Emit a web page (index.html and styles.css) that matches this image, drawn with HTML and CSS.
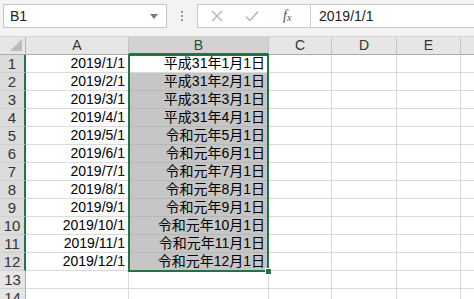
FILE: index.html
```html
<!DOCTYPE html>
<html lang="ja">
<head>
<meta charset="utf-8">
<link rel="stylesheet" href="styles.css">
</head>
<body>
<div class="app">
  <div class="toolbar">
    <div class="namebox">
      <span class="name">B1</span>
      <svg class="dd" width="8" height="5" viewBox="0 0 8 5"><path d="M0 0H8L4 5Z" fill="#7a7a7a"/></svg>
    </div>
    <div class="dots"><i></i><i></i><i></i></div>
    <div class="fbox">
      <div class="fbtns">
        <svg class="ico" width="12" height="12" viewBox="0 0 12 12"><path d="M1 1L11 11M11 1L1 11" stroke="#b4b4b4" stroke-width="1.4" fill="none"/></svg>
        <svg class="ico" width="14" height="12" viewBox="0 0 14 12"><path d="M1 6.5L5 10.5L13 1.5" stroke="#b4b4b4" stroke-width="1.4" fill="none"/></svg>
        <span class="fx">f<sub>x</sub></span>
      </div>
      <div class="finput">2019/1/1</div>
    </div>
  </div>
  <div class="sheet">
    <div class="grid">
      <div class="corner"><svg width="12" height="12" viewBox="0 0 12 12"><path d="M12 0V12H0Z" fill="#bcbcbc"/></svg></div>
      <div class="ch">A</div>
      <div class="ch sel">B</div>
      <div class="ch">C</div>
      <div class="ch">D</div>
      <div class="ch">E</div>
      <div class="ch last"></div>

      <div class="rh sel">1</div><div class="c num">2019/1/1</div><div class="c num act">平成31年1月1日</div><div class="c"></div><div class="c"></div><div class="c"></div><div class="c last"></div>
      <div class="rh sel">2</div><div class="c num">2019/2/1</div><div class="c num hl">平成31年2月1日</div><div class="c"></div><div class="c"></div><div class="c"></div><div class="c last"></div>
      <div class="rh sel">3</div><div class="c num">2019/3/1</div><div class="c num hl">平成31年3月1日</div><div class="c"></div><div class="c"></div><div class="c"></div><div class="c last"></div>
      <div class="rh sel">4</div><div class="c num">2019/4/1</div><div class="c num hl">平成31年4月1日</div><div class="c"></div><div class="c"></div><div class="c"></div><div class="c last"></div>
      <div class="rh sel">5</div><div class="c num">2019/5/1</div><div class="c num hl">令和元年5月1日</div><div class="c"></div><div class="c"></div><div class="c"></div><div class="c last"></div>
      <div class="rh sel">6</div><div class="c num">2019/6/1</div><div class="c num hl">令和元年6月1日</div><div class="c"></div><div class="c"></div><div class="c"></div><div class="c last"></div>
      <div class="rh sel">7</div><div class="c num">2019/7/1</div><div class="c num hl">令和元年7月1日</div><div class="c"></div><div class="c"></div><div class="c"></div><div class="c last"></div>
      <div class="rh sel">8</div><div class="c num">2019/8/1</div><div class="c num hl">令和元年8月1日</div><div class="c"></div><div class="c"></div><div class="c"></div><div class="c last"></div>
      <div class="rh sel">9</div><div class="c num">2019/9/1</div><div class="c num hl">令和元年9月1日</div><div class="c"></div><div class="c"></div><div class="c"></div><div class="c last"></div>
      <div class="rh sel">10</div><div class="c num">2019/10/1</div><div class="c num hl">令和元年10月1日</div><div class="c"></div><div class="c"></div><div class="c"></div><div class="c last"></div>
      <div class="rh sel">11</div><div class="c num">2019/11/1</div><div class="c num hl">令和元年11月1日</div><div class="c"></div><div class="c"></div><div class="c"></div><div class="c last"></div>
      <div class="rh sel">12</div><div class="c num">2019/12/1</div><div class="c num hl">令和元年12月1日</div><div class="c"></div><div class="c"></div><div class="c"></div><div class="c last"></div>
      <div class="rh">13</div><div class="c"></div><div class="c"></div><div class="c"></div><div class="c"></div><div class="c"></div><div class="c last"></div>
      <div class="rh">14</div><div class="c"></div><div class="c"></div><div class="c"></div><div class="c"></div><div class="c"></div><div class="c last"></div>
    </div>
    <div class="selection"><span class="handle"></span></div>
  </div>
</div>
</body>
</html>
```

FILE: styles.css
```css
* { box-sizing: border-box; }
html, body { margin: 0; padding: 0; }
body {
  width: 474px;
  height: 299px;
  overflow: hidden;
  background: #fff;
  font-family: "Liberation Sans", "Noto Sans CJK JP", sans-serif;
  color: #000;
}
.app { width: 474px; height: 299px; overflow: hidden; }

.toolbar {
  height: 37px;
  background: #f3f3f3;
  border-bottom: 1px solid #d5d5d5;
  display: flex;
  align-items: flex-start;
  padding-top: 4px;
}
.namebox {
  margin-left: 3px;
  width: 164px;
  height: 24px;
  background: #fff;
  border: 1px solid #c6c6c6;
  display: flex;
  align-items: center;
  justify-content: space-between;
  padding: 0 8px 0 6px;
}
.name { font-size: 14px; color: #222; line-height: 16px; }
.dd { display: block; }
.dots {
  width: 30px;
  height: 24px;
  display: flex;
  flex-direction: column;
  align-items: center;
  justify-content: center;
  gap: 2px;
}
.dots i { display: block; width: 2px; height: 2px; background: #9c9c9c; }
.fbox {
  flex: 1;
  height: 24px;
  background: #fff;
  border: 1px solid #c6c6c6;
  border-right: none;
  display: flex;
}
.fbtns {
  width: 113px;
  border-right: 1px solid #d0d0d0;
  display: flex;
  align-items: center;
  padding-left: 13px;
}
.fbtns .ico { display: block; }
.fbtns .ico:first-child { margin-right: 22px; }
.fbtns .ico:nth-child(2) { margin-right: 24px; }
.fx {
  font-family: "Liberation Serif", serif;
  font-style: italic;
  font-size: 14px;
  color: #555;
  line-height: 16px;
}
.fx sub { font-size: 10px; vertical-align: -1px; line-height: 10px; }
.finput {
  flex: 1;
  font-size: 14px;
  line-height: 16px;
  color: #222;
  display: flex;
  align-items: center;
  padding-left: 8px;
}

.sheet { position: relative; }
.grid {
  display: grid;
  grid-template-columns: 26px 103px 140px 63px 65px 64px 1fr;
  grid-template-rows: repeat(15, 18px);
}
.grid > div {
  border-right: 1px solid #dadada;
  border-bottom: 1px solid #dadada;
  font-size: 14px;
  line-height: 17px;
  white-space: nowrap;
}
.grid > .corner {
  background: #e6e6e6;
  border-right: 1px solid #b5b5b5;
  border-bottom: 1px solid #ababab;
  display: flex;
  align-items: flex-end;
  justify-content: flex-end;
  padding: 0 3px 3px 0;
}
.corner svg { display: block; }
.grid > .ch {
  background: #e6e6e6;
  border-right: 1px solid #c4c4c4;
  border-bottom: 1px solid #ababab;
  text-align: center;
  color: #333;
}
.grid > .ch.sel {
  background: #d2d2d2;
  border-bottom: 2px solid #217346;
  color: #1e4f33;
  line-height: 16px;
}
.grid > .ch.last { border-right: none; }
.grid > .rh {
  background: #e6e6e6;
  border-right: 1px solid #ababab;
  border-bottom: 1px solid #d0d0d0;
  text-align: center;
  color: #333;
  font-size: 15px;
}
.grid > .rh.sel {
  background: #dcdcdc;
  border-right: 2px solid #217346;
}
.grid > .c.last { border-right: none; }
.num { text-align: right; padding-right: 3px; }
.grid > .hl { background: #c6c6c6; border-bottom-color: #b8b8b8; border-right-color: #b8b8b8; }

.selection {
  position: absolute;
  left: 128px;
  top: 17px;
  width: 141px;
  height: 218px;
  border: 2px solid #217346;
  pointer-events: none;
}
.handle {
  position: absolute;
  right: -5px;
  bottom: -5px;
  width: 7px;
  height: 7px;
  background: #217346;
  border: 1px solid #fff;
}
```
